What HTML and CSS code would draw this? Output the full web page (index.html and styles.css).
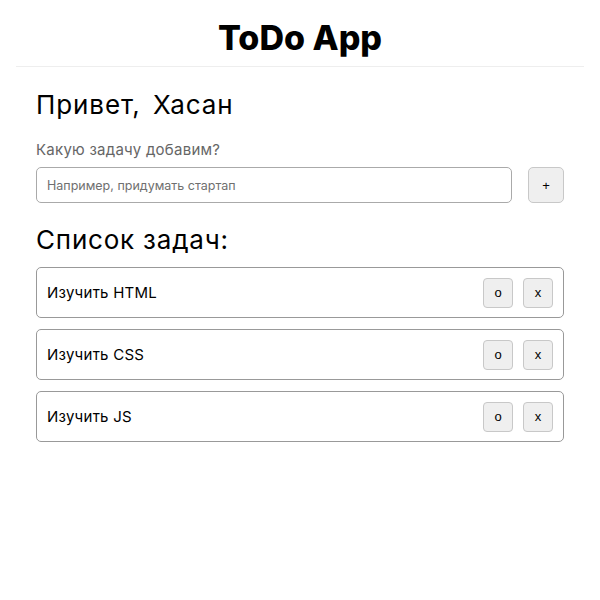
FILE: index.html
```html
<!DOCTYPE html>
<html lang="ru">
<head>
<meta charset="utf-8">
<title>ToDo App</title>
<link rel="stylesheet" href="styles.css">
</head>
<body>
<header class="header">
  <h1 class="title">ToDo App</h1>
</header>
<main class="content">
  <h2 class="greeting"><span>Привет,</span> <span>Хасан</span></h2>
  <label class="label" for="task">Какую задачу добавим?</label>
  <div class="add-row">
    <input id="task" class="task-input" type="text" placeholder="Например, придумать стартап">
    <button class="btn add-btn">+</button>
  </div>
  <h2 class="list-title">Список задач:</h2>
  <ul class="tasks">
    <li class="task"><span class="task-text">Изучить HTML</span><div class="actions"><button class="btn">o</button><button class="btn">x</button></div></li>
    <li class="task"><span class="task-text">Изучить CSS</span><div class="actions"><button class="btn">o</button><button class="btn">x</button></div></li>
    <li class="task"><span class="task-text">Изучить JS</span><div class="actions"><button class="btn">o</button><button class="btn">x</button></div></li>
  </ul>
</main>
</body>
</html>
```
FILE: styles.css
```css
body {
  margin: 8px;
  font-family: Inter, "Noto Sans", sans-serif;
  color: #000;
  background: #fff;
}
.header {
  margin: 0 8px;
  border-bottom: 1px solid #eeeeee;
  padding: 14px 0 12px;
}
.title {
  margin: 0;
  text-align: center;
  font-size: 34px;
  font-weight: 800;
  line-height: 32px;
  letter-spacing: 0;
}
.content {
  padding: 0 28px;
}
.greeting {
  margin: 22px 0 0;
  font-size: 26px;
  font-weight: 400;
  line-height: 32px;
  letter-spacing: 0.9px;
}
.greeting span + span {
  margin-left: 4px;
}
.label {
  display: block;
  margin-top: 19px;
  font-size: 15px;
  color: #666;
  line-height: 20px;
  letter-spacing: 0.25px;
}
.add-row {
  display: flex;
  gap: 16px;
  margin-top: 7px;
}
.task-input {
  flex: 1;
  height: 36px;
  box-sizing: border-box;
  border: 1px solid #aaa;
  border-radius: 5px;
  padding: 0 10px;
  font-family: inherit;
  font-size: 12.5px;
  outline: none;
}
.task-input::placeholder {
  color: #6f6f6f;
}
.btn {
  width: 30px;
  height: 30px;
  box-sizing: border-box;
  background: #efefef;
  border: 1px solid #c8c8c8;
  border-radius: 4px;
  font-family: "Liberation Sans", Arial, sans-serif;
  font-size: 13px;
  color: #000;
  padding: 0;
}
.add-btn {
  width: 36px;
  height: 36px;
  border-radius: 5px;
}
.list-title {
  margin: 21px 0 0;
  font-size: 26px;
  font-weight: 400;
  line-height: 32px;
  letter-spacing: 0.8px;
}
.tasks {
  list-style: none;
  margin: 11px 0 0;
  padding: 0;
  display: flex;
  flex-direction: column;
  gap: 11px;
}
.task {
  display: flex;
  align-items: center;
  justify-content: space-between;
  border: 1px solid #999;
  border-radius: 5px;
  padding: 10px;
  height: 51px;
  box-sizing: border-box;
}
.task-text {
  font-size: 15px;
  letter-spacing: 0.25px;
}
.actions {
  display: flex;
  gap: 10px;
}
```
